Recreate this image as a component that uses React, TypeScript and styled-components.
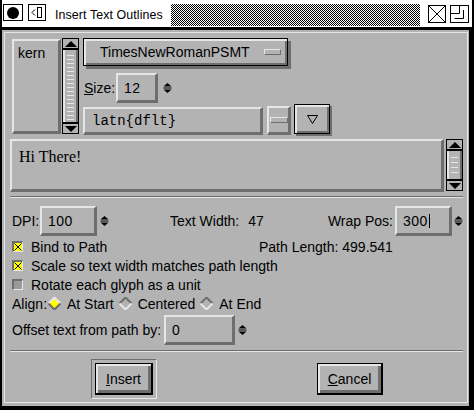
import React from 'react';
import styled, { createGlobalStyle, css } from 'styled-components';

const BG = '#b3b3b3';
const LIGHT = '#e6e6e6';
const DARK = '#6e6e6e';

const GlobalStyle = createGlobalStyle`
  html, body { margin: 0; padding: 0; background: #000; }
  body {
    font-family: 'Liberation Sans', Arial, sans-serif;
    font-size: 14px;
    color: #000;
  }
  * { box-sizing: border-box; }
`;

const raised = css`
  border-style: solid;
  border-width: 2px 3px 3px 2px;
  border-color: ${LIGHT} ${DARK} ${DARK} ${LIGHT};
`;

const Window = styled.div`
  width: 474px;
  height: 410px;
  background: #000;
  display: flex;
  flex-direction: column;
  overflow: hidden;
`;

const TitleBar = styled.div`
  flex: none;
  height: 30px;
  margin: 0 2px;
  background: #fff;
  border-bottom: 3px solid #000;
  display: flex;
  align-items: flex-start;
  padding: 4px 3px 0 1px;
`;

const TitleBox = styled.div<{ $w: number; $h?: number; $ml?: number; $mt?: number }>`
  flex: none;
  width: ${p => p.$w}px;
  height: ${p => p.$h ?? 17}px;
  margin-left: ${p => p.$ml ?? 0}px;
  margin-top: ${p => p.$mt ?? 0}px;
  border: 1px solid #000;
  display: flex;
  align-items: center;
  justify-content: center;
  svg { display: block; }
`;

const TitleText = styled.div`
  flex: none;
  margin: 3px 8px 0 9px;
  font-size: 12.4px;
  letter-spacing: 0.1px;
  line-height: 17px;
  white-space: nowrap;
`;

const Checker = styled.div`
  flex: 1;
  height: 22px;
  background-image: repeating-conic-gradient(#000 0 25%, #fff 0 50%);
  background-size: 2px 2px;
`;

const Frame = styled.div`
  flex: 1;
  margin: 0 5px 4px 2px;
  background: ${BG};
  padding: 2px 1px 3px 2px;
  display: flex;
`;

const Panel = styled.div`
  flex: 1;
  border: 1px solid ${LIGHT};
  padding: 5px 4px 0 5px;
  display: flex;
  flex-direction: column;
`;

const TopSection = styled.div`
  flex: none;
  height: 98px;
  display: flex;
  align-items: flex-start;
`;

const ListBox = styled.div`
  flex: none;
  width: 49px;
  height: 95px;
  margin: 1px 0 0 2px;
  ${raised}
  padding: 4px 0 0 4px;
  line-height: 16px;
`;

const SbBox = styled.div<{ $h: number; $ml?: number }>`
  flex: none;
  width: 17px;
  height: ${p => p.$h}px;
  margin-left: ${p => p.$ml ?? 0}px;
  border: 1px solid #000;
  background: ${BG};
  display: flex;
  flex-direction: column;
`;

const SbArrow = styled.div`
  flex: none;
  height: 9px;
  display: flex;
  align-items: center;
  justify-content: center;
  svg { display: block; }
`;

const SbThumb = styled.div<{ $gap: number }>`
  flex: 1;
  border-top: 2px solid #000;
  border-bottom: 2px solid #000;
  position: relative;
  box-shadow: inset 2px 0 ${LIGHT}, inset -2px 0 ${DARK};
  &::after {
    content: '';
    position: absolute;
    left: 4px;
    right: 4px;
    top: 2px;
    bottom: 2px;
    background: repeating-linear-gradient(
      to bottom,
      transparent 0 ${p => p.$gap - 1}px,
      ${LIGHT} ${p => p.$gap - 1}px ${p => p.$gap}px
    );
  }
`;

const Scrollbar = ({ h, gap, ml }: { h: number; gap: number; ml?: number }) => (
  <SbBox $h={h} $ml={ml}>
    <SbArrow>
      <svg width="12" height="6" viewBox="0 0 12 6">
        <path d="M6 0 L12 6 L0 6 Z" fill="#000" />
      </svg>
    </SbArrow>
    <SbThumb $gap={gap} />
    <SbArrow>
      <svg width="12" height="6" viewBox="0 0 12 6">
        <path d="M0 0 L12 0 L6 6 Z" fill="#000" />
      </svg>
    </SbArrow>
  </SbBox>
);

const FontColumn = styled.div`
  flex: none;
  width: 249px;
  margin-left: 4px;
  display: flex;
  flex-direction: column;
`;

const FontButton = styled.div`
  flex: none;
  width: 205px;
  height: 28px;
  border: 1px solid #000;
  box-shadow: 3px 3px 0 ${DARK}, inset 2px 2px ${LIGHT}, inset -2px -2px ${DARK};
  display: flex;
  align-items: center;
  justify-content: space-between;
  padding: 0 6px 0 16px;
  white-space: nowrap;
`;

const Bar = styled.div<{ $w: number }>`
  flex: none;
  width: ${p => p.$w}px;
  height: 6px;
  border: 1px solid;
  border-color: ${LIGHT} ${DARK} ${DARK} ${LIGHT};
  background: ${BG};
`;

const Row = styled.div<{ $h: number; $mt?: number }>`
  flex: none;
  height: ${p => p.$h}px;
  margin-top: ${p => p.$mt ?? 0}px;
  display: flex;
  align-items: center;
  white-space: nowrap;
`;

const Label = styled.span<{ $w?: number; $ml?: number; $pl?: number; $push?: boolean }>`
  flex: none;
  ${p => (p.$w ? `width: ${p.$w}px;` : '')}
  margin-left: ${p => (p.$push ? 'auto' : `${p.$ml ?? 0}px`)};
  margin-right: ${p => (p.$push ? '2px' : '0')};
  padding-left: ${p => p.$pl ?? 0}px;
  line-height: 16px;
  white-space: nowrap;
`;

const Field = styled.div<{ $w: number; $h?: number; $mono?: boolean; $ml?: number; $mt?: number }>`
  flex: none;
  width: ${p => p.$w}px;
  height: ${p => p.$h ?? 30}px;
  margin-left: ${p => p.$ml ?? 0}px;
  margin-top: ${p => p.$mt ?? 0}px;
  ${raised}
  background: ${BG};
  display: flex;
  align-items: center;
  padding-left: ${p => (p.$mono ? 7 : 6)}px;
  font-family: ${p => (p.$mono ? "'Liberation Mono', 'Courier New', monospace" : "'Liberation Sans', Arial, sans-serif")};
  letter-spacing: ${p => (p.$mono ? 0 : 0.5)}px;
  font-size: 14px;
  white-space: nowrap;
`;

const Caret = styled.span`
  display: inline-block;
  width: 1px;
  height: 14px;
  background: #000;
  margin-left: 1px;
`;

const SpinIcon = styled.svg<{ $ml: number }>`
  flex: none;
  display: block;
  margin-left: ${p => p.$ml}px;
`;

const Spin = ({ ml }: { ml: number }) => (
  <SpinIcon $ml={ml} width="9" height="10" viewBox="0 0 9 10">
    <path d="M4.5 0 L8.5 3.5 L0.5 3.5 Z" fill="#000" />
    <rect x="0.5" y="4.5" width="8" height="1" fill="#000" />
    <path d="M0.5 6.5 L8.5 6.5 L4.5 10 Z" fill="#000" />
  </SpinIcon>
);

const ScriptRow = styled.div`
  flex: none;
  height: 32px;
  margin-top: 1px;
  display: flex;
  align-items: flex-start;
`;

const BarButton = styled.div`
  flex: none;
  width: 24px;
  height: 29px;
  margin: 2px 0 0 4px;
  ${raised}
  display: flex;
  align-items: center;
  justify-content: center;
`;

const TriButton = styled.div`
  flex: none;
  width: 36px;
  height: 30px;
  margin-left: 3px;
  border: 1px solid #000;
  box-shadow: 2px 2px 0 ${DARK}, inset 2px 2px ${LIGHT}, inset -2px -2px ${DARK};
  display: flex;
  align-items: center;
  justify-content: center;
  svg { display: block; }
`;

const TextRow = styled.div`
  flex: none;
  height: 53px;
  margin-top: 3px;
  display: flex;
  align-items: flex-start;
`;

const TextArea = styled.div`
  flex: none;
  width: 434px;
  height: 53px;
  ${raised}
  padding: 7px 0 0 7px;
  font-family: 'Liberation Serif', 'Times New Roman', serif;
  font-size: 16px;
  line-height: 18px;
`;

const Separator = styled.div<{ $mt: number }>`
  flex: none;
  height: 2px;
  margin-top: ${p => p.$mt}px;
  border-top: 1px solid ${DARK};
  border-bottom: 1px solid ${LIGHT};
`;

const CheckBox = styled.span<{ $on?: boolean }>`
  flex: none;
  width: 11px;
  height: 11px;
  margin: 0 8px 0 2px;
  border-style: solid;
  border-width: 2px 1px 1px 2px;
  border-color: ${DARK} ${LIGHT} ${LIGHT} ${DARK};
  background: ${p => (p.$on ? '#ffff00' : '#9a9a9a')};
  display: flex;
  svg { display: block; }
`;

const Check = ({ on }: { on?: boolean }) => (
  <CheckBox $on={on}>
    {on && (
      <svg width="8" height="8" viewBox="0 0 8 8">
        <path d="M0.5 0.5 L7.5 7.5 M7.5 0.5 L0.5 7.5" stroke="#000" strokeWidth="1" />
      </svg>
    )}
  </CheckBox>
);

const DiamondIcon = styled.svg`
  flex: none;
  display: block;
  margin-right: 6px;
`;

const Diamond = ({ on }: { on?: boolean }) => (
  <DiamondIcon width="13" height="13" viewBox="0 0 13 13">
    <path d="M6.5 0.5 L12.5 6.5 L6.5 12.5 L0.5 6.5 Z" fill={on ? '#ffff00' : BG} />
    <path d="M0.5 6.5 L6.5 0.5 L12.5 6.5" fill="none" stroke={on ? LIGHT : DARK} strokeWidth="2" />
    <path d="M0.5 6.5 L6.5 12.5 L12.5 6.5" fill="none" stroke={on ? DARK : LIGHT} strokeWidth="2" />
  </DiamondIcon>
);

const RadioOption = styled.span<{ $ml?: number }>`
  flex: none;
  display: flex;
  align-items: center;
  margin-left: ${p => p.$ml ?? 0}px;
`;

const ButtonRow = styled.div`
  flex: none;
  height: 40px;
  margin-top: 7px;
  display: flex;
  align-items: center;
  padding: 0 80px 0 81px;
  justify-content: space-between;
`;

const DefaultFrame = styled.div`
  flex: none;
  width: 66px;
  height: 40px;
  border: 1px solid;
  border-color: ${DARK} ${LIGHT} ${LIGHT} ${DARK};
  padding: 3px;
  display: flex;
`;

const PushButton = styled.div<{ $w: number }>`
  flex: none;
  width: ${p => p.$w}px;
  height: 32px;
  border: 1px solid #000;
  border-width: 1px 2px 2px 1px;
  box-shadow: inset 2px 2px ${LIGHT}, inset -3px -3px ${DARK};
  display: flex;
  align-items: center;
  justify-content: center;
  white-space: nowrap;
  line-height: 16px;
`;

export default function App() {
  return (
    <>
      <GlobalStyle />
      <Window>
        <TitleBar>
          <TitleBox $w={20}>
            <svg width="12" height="12" viewBox="0 0 12 12">
              <circle cx="6" cy="6" r="6" fill="#000" />
            </svg>
          </TitleBox>
          <TitleBox $w={18} $ml={5}>
            <svg width="16" height="15" viewBox="0 0 16 15">
              <path d="M6 4.5 L3 7.5 L6 10.5" fill="none" stroke="#000" strokeWidth="1" />
              <rect x="8.5" y="2.5" width="4" height="10" fill="none" stroke="#000" strokeWidth="1" />
            </svg>
          </TitleBox>
          <TitleText>Insert Text Outlines</TitleText>
          <Checker />
          <TitleBox $w={18} $h={18} $ml={8} $mt={1}>
            <svg width="16" height="16" viewBox="0 0 16 16">
              <path d="M0 0 L16 16 M16 0 L0 16" stroke="#000" strokeWidth="1" />
            </svg>
          </TitleBox>
          <TitleBox $w={19} $h={18} $ml={4} $mt={1}>
            <svg width="17" height="16" viewBox="0 0 17 16">
              <path d="M0 7.5 H8.5 V0" fill="none" stroke="#000" strokeWidth="1" />
              <path d="M3.5 12.5 H12.5 V4" fill="none" stroke="#000" strokeWidth="1" />
            </svg>
          </TitleBox>
        </TitleBar>
        <Frame>
          <Panel>
            <TopSection>
              <ListBox>kern</ListBox>
              <Scrollbar h={96} gap={4} ml={1} />
              <FontColumn>
                <FontButton>
                  <span>TimesNewRomanPSMT</span>
                  <Bar $w={17} />
                </FontButton>
                <Row $h={30} $mt={7}>
                  <Label $w={33} $pl={1}>
                    <u>S</u>ize:
                  </Label>
                  <Field $w={42}>12</Field>
                  <Spin ml={5} />
                </Row>
                <ScriptRow>
                  <Field $w={180} $h={28} $mt={3} $mono>
                    latn{'{'}dflt{'}'}
                  </Field>
                  <BarButton>
                    <Bar $w={18} />
                  </BarButton>
                  <TriButton>
                    <svg width="11" height="9" viewBox="0 0 11 9">
                      <path d="M0.5 0.5 L10.5 0.5 L5.5 8.5 Z" fill="none" stroke="#000" strokeWidth="1" />
                    </svg>
                  </TriButton>
                </ScriptRow>
              </FontColumn>
            </TopSection>
            <TextRow>
              <TextArea>Hi There!</TextArea>
              <Scrollbar h={52} gap={5} ml={2} />
            </TextRow>
            <Separator $mt={4} />
            <Row $h={30} $mt={8}>
              <Label $w={30} $pl={2}>
                DPI:
              </Label>
              <Field $w={57}>100</Field>
              <Spin ml={3} />
              <Label $ml={61}>Text Width:</Label>
              <Label $ml={9}>47</Label>
              <Label $push>Wrap Pos:</Label>
              <Field $w={57}>
                300
                <Caret />
              </Field>
              <Spin ml={2} />
            </Row>
            <Row $h={19} $mt={1}>
              <Check on />
              <Label $w={228}>Bind to Path</Label>
              <Label>Path Length: 499.541</Label>
            </Row>
            <Row $h={19}>
              <Check on />
              <Label>Scale so text width matches path length</Label>
            </Row>
            <Row $h={19}>
              <Check />
              <Label>Rotate each glyph as a unit</Label>
            </Row>
            <Row $h={19}>
              <Label $w={38} $pl={2}>
                Align:
              </Label>
              <RadioOption>
                <Diamond on />
                At Start
              </RadioOption>
              <RadioOption $ml={5}>
                <Diamond />
                Centered
              </RadioOption>
              <RadioOption $ml={5}>
                <Diamond />
                At End
              </RadioOption>
            </Row>
            <Row $h={30} $mt={2}>
              <Label $w={154} $pl={2}>
                Offset text from path by:
              </Label>
              <Field $w={71}>0</Field>
              <Spin ml={3} />
            </Row>
            <Separator $mt={5} />
            <ButtonRow>
              <DefaultFrame>
                <PushButton $w={58}>
                  <span>
                    <u>I</u>nsert
                  </span>
                </PushButton>
              </DefaultFrame>
              <PushButton $w={66}>
                <span>
                  <u>C</u>ancel
                </span>
              </PushButton>
            </ButtonRow>
          </Panel>
        </Frame>
      </Window>
    </>
  );
}
